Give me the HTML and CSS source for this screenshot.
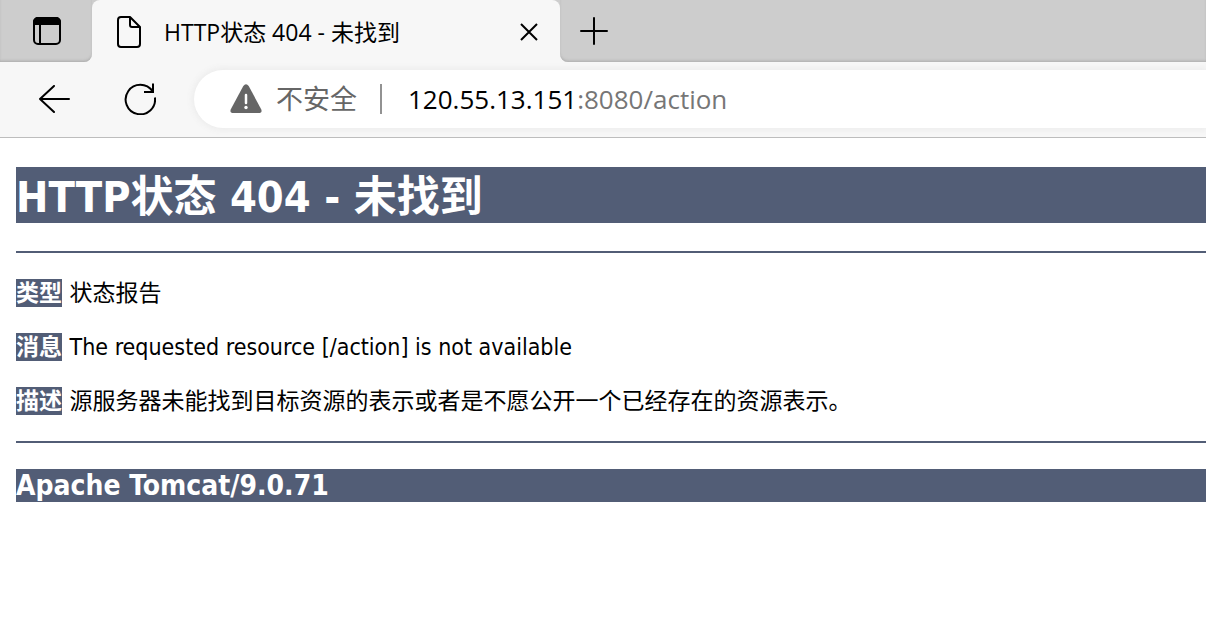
FILE: index.html
```html
<!DOCTYPE html>
<html lang="zh-CN">
<head>
<meta charset="utf-8">
<meta name="viewport" content="width=device-width, initial-scale=1">
<title>HTTP状态 404 - 未找到</title>
<link rel="stylesheet" href="styles.css">
</head>
<body>
<header class="browser">
  <div class="tab-strip">
    <div class="strip-start">
      <button class="icon-button" type="button" aria-label="标签操作菜单">
        <svg width="28" height="28" viewBox="0 0 28 28" fill="none" stroke="#000" stroke-width="2"><rect x="1" y="1" width="26" height="26" rx="4"/><path d="M1 7V5a4 4 0 0 1 4-4h18a4 4 0 0 1 4 4v2z" fill="#000"/><path d="M7 7v20"/></svg>
      </button>
    </div>
    <div class="tab">
      <svg class="page-icon" width="26" height="34" viewBox="0 0 26 34" fill="none" stroke="#000" stroke-width="2" stroke-linejoin="round"><path d="M5 2h9l10 10v17a3 3 0 0 1-3 3H5a3 3 0 0 1-3-3V5a3 3 0 0 1 3-3z"/><path d="M14 2v8a2 2 0 0 0 2 2h8"/></svg>
      <span class="tab-title">HTTP状态 404 - 未找到</span>
      <button class="icon-button tab-close" type="button" aria-label="关闭标签页">
        <svg width="18" height="18" viewBox="0 0 18 18" stroke="#000" stroke-width="2"><path d="M1 1l16 16M17 1L1 17"/></svg>
      </button>
    </div>
    <div class="strip-end">
      <button class="icon-button" type="button" aria-label="新建标签页">
        <svg width="28" height="28" viewBox="0 0 28 28" stroke="#000" stroke-width="2"><path d="M14 1v26M1 14h26" stroke-linecap="round"/></svg>
      </button>
    </div>
  </div>
  <nav class="toolbar" aria-label="导航">
    <button class="icon-button" type="button" aria-label="返回">
      <svg width="32" height="28" viewBox="0 0 32 28" fill="none" stroke="#000" stroke-width="2" stroke-linecap="round" stroke-linejoin="round"><path d="M16 1L2 14l14 13M2 14h29"/></svg>
    </button>
    <button class="icon-button" type="button" aria-label="刷新">
      <svg width="32" height="32" viewBox="0 0 32 32" fill="none" stroke="#000" stroke-width="2"><path d="M30.900 14.500A14.700 14.700 0 1 1 28.500 8.300"/><path d="M20 9h9V.5"/></svg>
    </button>
    <div class="address">
      <svg class="warning-icon" width="32" height="30" viewBox="0 0 32 30"><path d="M13.300 2Q16-1.500 18.700 2L31.300 25.500Q32.500 29 28.500 29h-25Q-.5 29 .7 25.500z" fill="#666"/><path d="M16 11v8" stroke="#fff" stroke-width="2.500" stroke-linecap="round"/><circle cx="16" cy="23.500" r="1.700" fill="#fff"/></svg>
      <span class="security">不安全</span>
      <a class="url" href="#"><span class="host">120.55.13.151</span>:8080/action</a>
    </div>
  </nav>
</header>
<main class="report">
  <h1 class="title">HTTP状态 404 - 未找到</h1>
  <hr class="line">
  <p class="entry"><b class="label">类型</b> 状态报告</p>
  <p class="entry"><b class="label">消息</b> The requested resource [/action] is not available</p>
  <p class="entry"><b class="label">描述</b> 源服务器未能找到目标资源的表示或者是不愿公开一个已经存在的资源表示。</p>
  <hr class="line">
  <h3 class="server">Apache Tomcat/9.0.71</h3>
</main>
</body>
</html>
```
FILE: styles.css
```css
* { box-sizing: border-box; }

body {
  margin: 0;
  background: #fff;
  color: #000;
  overflow-x: hidden;
}

.browser {
  background: #f7f7f7;
  border-bottom: 1px solid #bdbdbd;
  font-family: "Open Sans", "Noto Sans CJK SC", sans-serif;
}

.icon-button {
  display: flex;
  padding: 0;
  border: 0;
  background: none;
}

.tab-strip {
  display: flex;
  height: 62px;
  background: linear-gradient(#cdcdcd 50%, #f7f7f7 50%);
}

.strip-start,
.strip-end {
  display: flex;
  align-items: center;
  background: #cdcdcd;
  box-shadow: inset 0 -2px 3px -1px #aaa;
}

.strip-start {
  width: 92px;
  padding-left: 33px;
  border-bottom-right-radius: 8px;
}

.strip-end {
  flex: 1;
  padding-left: 20px;
  border-bottom-left-radius: 8px;
}

.tab {
  display: flex;
  align-items: center;
  width: 468px;
  padding: 1px 22px 0 24px;
  border-radius: 8px 8px 0 0;
  background: #f7f7f7;
}

.tab-title {
  flex: 1;
  margin-left: 22px;
  font-size: 23px;
  line-height: 34px;
  white-space: nowrap;
}

.toolbar {
  display: flex;
  align-items: center;
  padding: 8px 0 9px 38px;
  gap: 54px;
}

.address {
  display: flex;
  flex: 1;
  align-items: center;
  height: 58px;
  margin-left: -16px;
  padding-left: 36px;
  border-radius: 29px 0 0 29px;
  background: #fff;
  box-shadow: 0 0 6px 2px #ececec;
  font-size: 27px;
  line-height: 36px;
  white-space: nowrap;
}

.security {
  margin-left: 14px;
  padding-right: 23px;
  color: #666;
}

.url {
  padding-left: 26px;
  border-left: 2px solid #929292;
  line-height: 30px;
  color: #767676;
  font-size: 26px;
  text-decoration: none;
}

.host { color: #000; }

.report {
  padding: 29px 0 0 16px;
  font-family: "DejaVu Sans Condensed", "Noto Sans CJK SC", sans-serif;
}

.title,
.server,
.label {
  background: #525d76;
  color: #fff;
}

.title {
  margin: 0 0 28px;
  padding-top: 4px;
  font-size: 43px;
  line-height: 52px;
}

.line {
  height: 2px;
  margin: 0;
  border: 0;
  background: #525d76;
}

.entry {
  margin: 26px 0;
  font-size: 23px;
  line-height: 28px;
}

.label {
  display: inline-block;
  margin-right: 1px;
}

.server {
  margin: 26px 0 0;
  font-size: 28px;
  line-height: 33px;
}
```
